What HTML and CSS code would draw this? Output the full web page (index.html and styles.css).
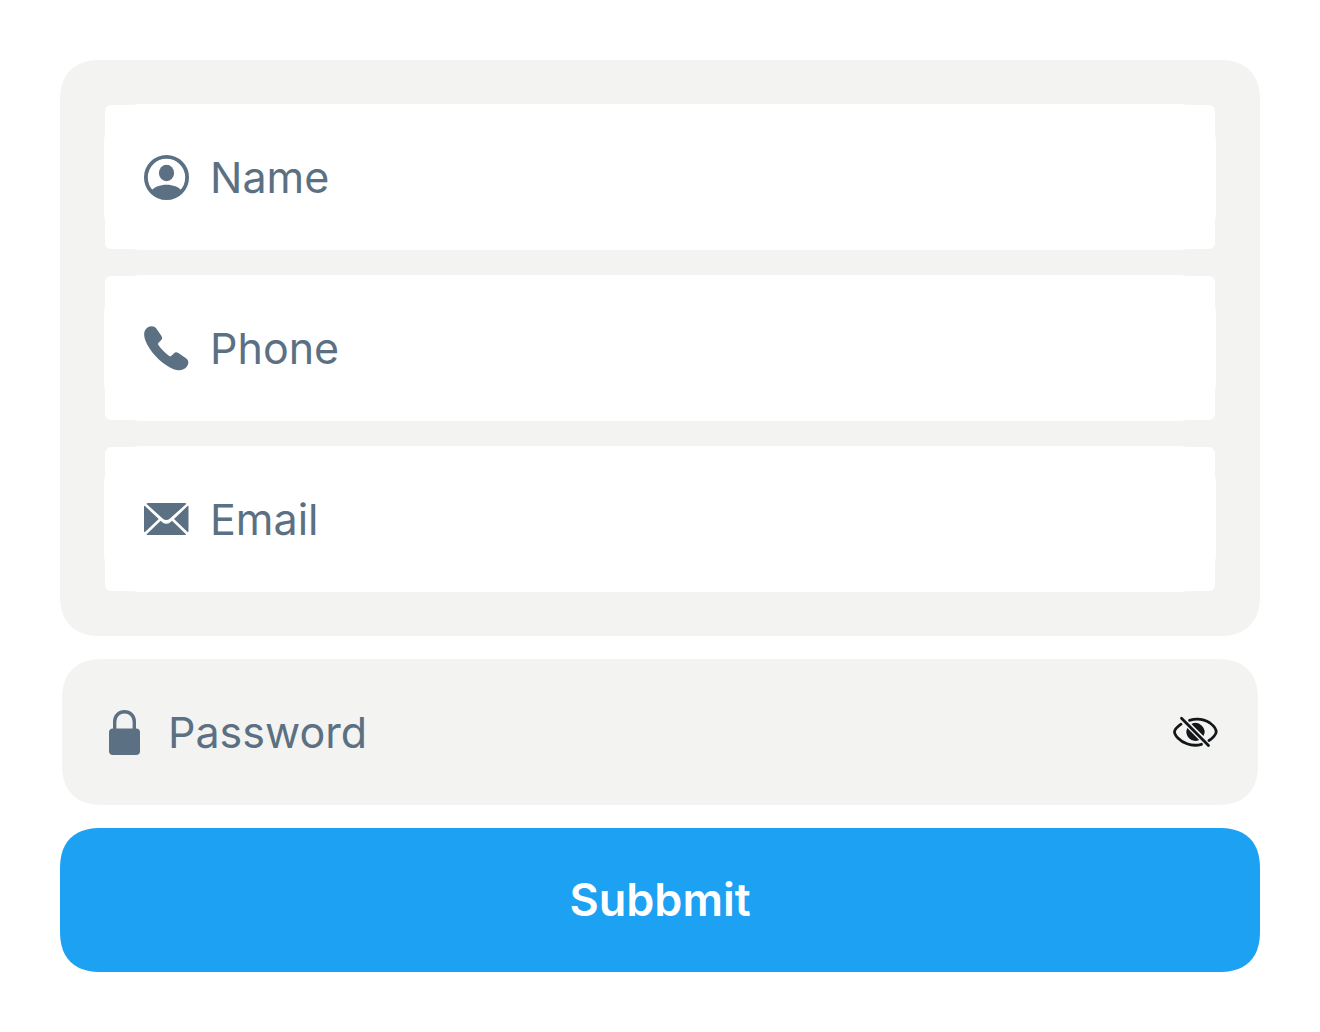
FILE: index.html
```html
<!DOCTYPE html>
<html lang="en">
<head>
<meta charset="utf-8">
<meta name="viewport" content="width=device-width, initial-scale=1">
<title>Sign up</title>
<link rel="stylesheet" href="styles.css">
</head>
<body>
<form class="form">
  <div class="card">
    <label class="field">
      <svg class="icon" viewBox="0 0 45 45" aria-hidden="true">
        <circle cx="22.5" cy="22.5" r="20.6" fill="none" stroke="currentColor" stroke-width="3.8"/>
        <ellipse cx="22.5" cy="18" rx="7.6" ry="8.3" fill="currentColor"/>
        <path d="M7.5 35.5C10.5 32 16 29.8 22.5 29.8S34.5 32 37.5 35.5C33.5 40.5 28 43 22.500 43S11.5 40.5 7.5 35.5Z" fill="currentColor"/>
      </svg>
      <input class="input" type="text" name="name" placeholder="Name" aria-label="Name">
    </label>
    <label class="field">
      <svg class="icon" viewBox="0 0 45 45" aria-hidden="true">
        <path d="M3.5 1.600C6.500-.4 10.200-.4 12.300 2.500L17.300 9.700C18.600 11.600 18.300 12.900 17 14.300L14.600 16.800C13.800 17.600 13.900 18.300 14.400 19.100C17 22.900 21 27 25.200 29.900C26 30.400 26.700 30.400 27.400 29.700L29.800 27.400C31.200 26.100 32.700 25.900 34.400 27.100L42 32.300C45 34.400 44.900 37.600 42.900 40.600C39.800 44.800 34.500 45.300 29 43C20 39.200 9 29.500 3.200 18.500C-.5 11.500-1.300 5.100 3.500 1.600Z" fill="currentColor"/>
      </svg>
      <input class="input" type="tel" name="phone" placeholder="Phone" aria-label="Phone">
    </label>
    <label class="field">
      <svg class="icon" viewBox="0 0 45 45" aria-hidden="true">
        <path d="M4.500 6H40.500Q41.800 6 42.500 6.700L26 21.400Q22.300 24.800 18.600 21.400L2.300 6.700Q3 6 4.500 6ZM0 9.500Q0 8.800.7 8.800L14.700 22L.7 35.300Q0 34.800 0 34ZM44.500 9.500V34Q44.500 34.800 43.800 35.300L30 22L43.800 8.800Q44.500 8.800 44.500 9.500ZM2.400 37.400L16.700 23.800L18.300 25.200Q22.300 28.300 26.300 25.200L28 23.800L42.200 37.400Q41.500 38 40.500 38H4.500Q3 38 2.400 37.400Z" fill="currentColor"/>
      </svg>
      <input class="input" type="email" name="email" placeholder="Email" aria-label="Email">
    </label>
  </div>
  <div class="password">
    <label class="password-label">
      <svg class="icon icon-lock" viewBox="0 0 31 45" aria-hidden="true">
        <rect y="18.500" width="31" height="26.500" rx="4" fill="currentColor"/>
        <path d="M5.700 20V11.500C5.700 5.800 10 1.700 15.500 1.700S25.300 5.800 25.300 11.500V20" fill="none" stroke="currentColor" stroke-width="3.400"/>
      </svg>
      <input class="input" type="password" name="password" placeholder="Password" aria-label="Password">
    </label>
    <button class="toggle" type="button" aria-label="Show password">
      <svg class="icon" viewBox="0 0 45 45" fill="none" stroke="currentColor" stroke-width="2.8" stroke-linecap="round" aria-hidden="true">
        <path d="M16.500 10.300C23 8.300 31 9 37 13C40.500 15.600 43.200 19.700 43.200 22C43.200 24.500 39.500 28.400 36 30.500M8 14.200C4.500 16.700 1.500 20 1.500 22C1.500 25.200 7 31.300 14 33.800C19 35.600 24 35.600 28.500 34.300"/>
        <path d="M14.300 18A9 9 0 0 0 26.200 30ZM18.400 14A9 9 0 0 1 30.500 26.100Z" fill="currentColor" stroke="none"/>
        <path d="M8.500 8.200L35.500 35.400"/>
      </svg>
    </button>
  </div>
  <button class="submit" type="submit">Subbmit</button>
</form>
</body>
</html>
```
FILE: styles.css
```css
* { box-sizing: border-box; }

body {
  margin: 0;
  padding: 60px;
  background: #fff;
  color: #5b7083;
  font-family: Inter, "Liberation Sans", sans-serif;
  font-size: 43px;
  line-height: 56px;
}

.form {
  display: flex;
  flex-direction: column;
  gap: 23px;
}

.card,
.field,
.password,
.submit {
  border-radius: 36px;
}

/* Continuous corners where the browser can draw them */
@supports (corner-shape: superellipse(1.3)) {
  .card,
  .field,
  .password,
  .submit {
    border-radius: 42px;
    corner-shape: superellipse(1.3);
  }
}

.card {
  display: flex;
  flex-direction: column;
  gap: 25px;
  padding: 44px;
  background: #f3f3f1;
}

.field {
  position: relative;
  display: flex;
  align-items: center;
  gap: 21px;
  padding: 45px 40px;
  background: #fff;
}

/* White backing with tighter corners behind each field */
.field::before {
  content: "";
  position: absolute;
  inset: 1px;
  border-radius: 6px;
  background: #fff;
}

.icon {
  position: relative;
  flex: none;
  display: block;
  width: 45px;
  height: 45px;
}

.icon-lock { width: 31px; }

.input {
  position: relative;
  flex: 1;
  min-width: 0;
  height: 56px;
  padding: 0;
  border: 0;
  outline: 0;
  background: transparent;
  color: inherit;
  font: inherit;
}

.input::placeholder {
  color: inherit;
  opacity: 1;
}

.password {
  display: flex;
  align-items: center;
  gap: 20px;
  margin: 0 2px;
  padding: 45px 40px 45px 47px;
  background: #f3f3f1;
}

.password-label {
  flex: 1;
  min-width: 0;
  display: flex;
  align-items: center;
  gap: 28px;
}

.toggle {
  padding: 0;
  border: 0;
  background: transparent;
  color: #14171a;
}

.submit {
  padding: 44px;
  border: 0;
  background: #1da1f2;
  color: #fff;
  font: inherit;
  font-size: 45px;
  font-weight: 600;
  line-height: 56px;
}
```
